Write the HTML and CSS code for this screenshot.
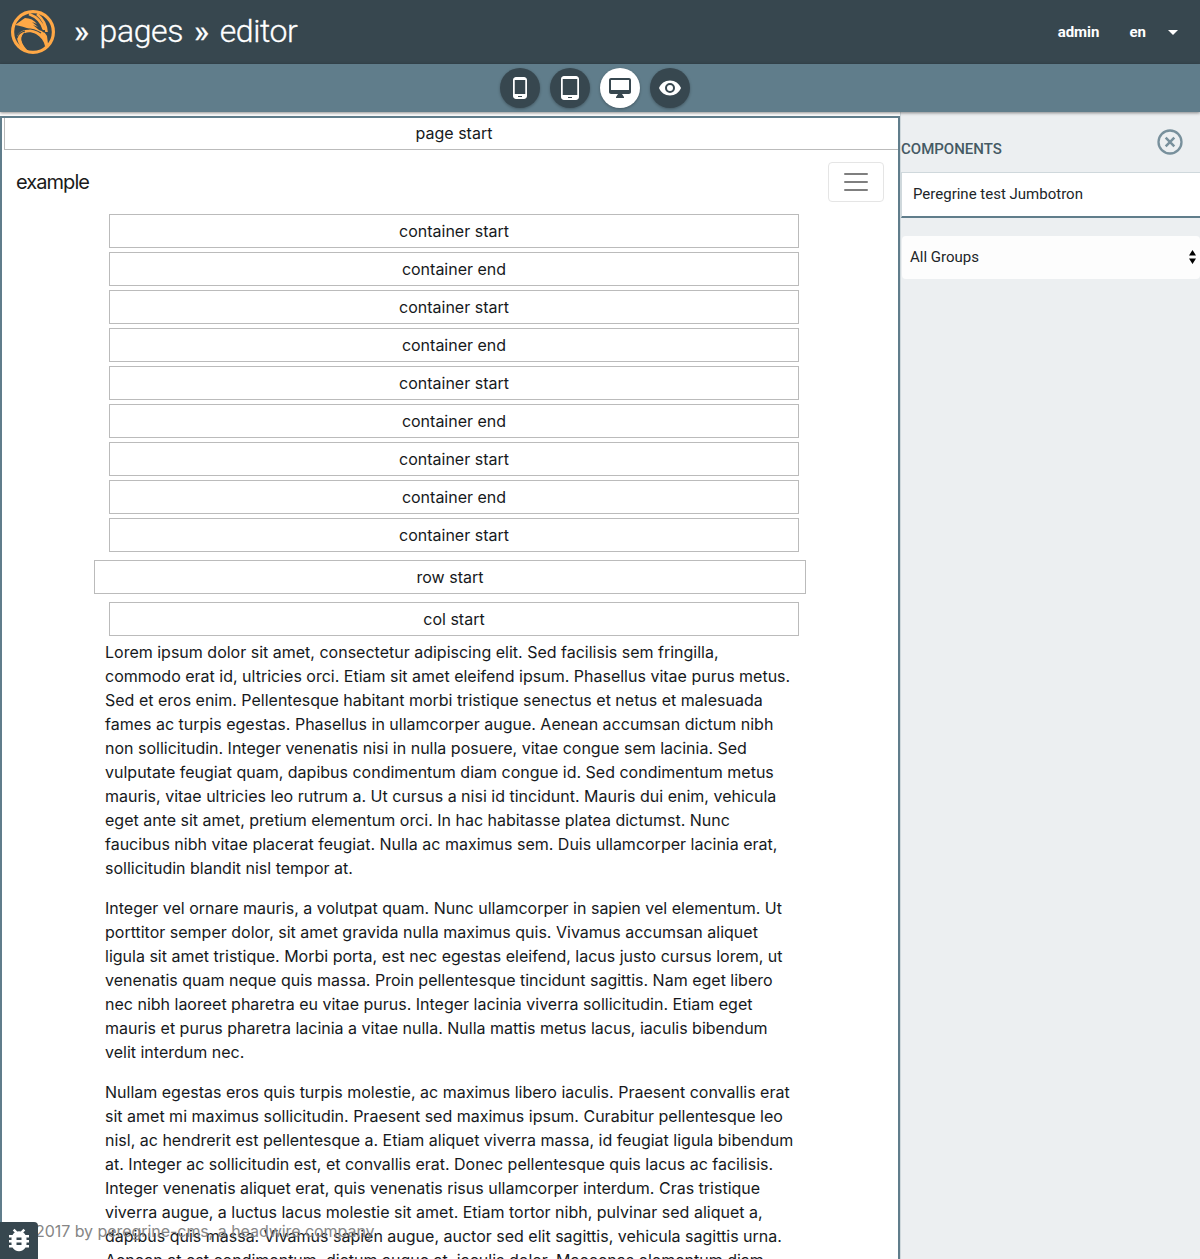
FILE: index.html
```html
<!DOCTYPE html>
<html lang="en">
<head>
<meta charset="utf-8">
<title>pages » editor</title>
<link rel="stylesheet" href="styles.css">
</head>
<body>
<header class="topbar">
  <svg class="logo" viewBox="0 0 44 44"><circle cx="22" cy="22" r="20.4" fill="none" stroke="#ffa846" stroke-width="3.2"/><path fill="#ffa846" d="M4 15c4-3 7-5 10-7 5 0 9 2 12 6l-5-2 6 5-5-2 6 5c3 1 6 2 8 6l1 8c-1 2-2 3-3 2-1-5-4-9-9-12-6-3-12-2-14 2-2 5 2 11 7 16-7-2-12-8-12-16 3-5 7-7 13-6-4-3-10-4-15-5z"/><path fill="none" stroke="#ffa846" stroke-width="2.600" d="M18 4c8 3 13 8 15 16M26 4c6 5 9 10 9.500 18"/><path fill="none" stroke="#37474f" stroke-width="1.200" d="M4 21c8-3 18-3 26 2M14 23c-4 3-4 9 1 14M6 28c1-4 4-6 8-7M31 20l2 2"/></svg>
  <h1 class="crumbs"><span class="sep">»</span><span>pages</span><span class="sep">»</span><span>editor</span></h1>
  <nav class="user"><span>admin</span><span class="lang">en</span><i class="caret"></i></nav>
</header>
<div class="toolbar">
  <button class="tool"><svg viewBox="0 0 24 24"><path d="M16 1H8C6.34 1 5 2.34 5 4v16c0 1.66 1.34 3 3 3h8c1.66 0 3-1.34 3-3V4c0-1.66-1.34-3-3-3zm-2 20h-4v-1h4v1zm3.25-3H6.75V4h10.500z"/></svg></button>
  <button class="tool tablet"><svg viewBox="0 0 24 24"><path d="M18 0H6C4.340 0 3 1.340 3 3v18c0 1.660 1.340 3 3 3h12c1.660 0 3-1.340 3-3V3c0-1.660-1.340-3-3-3zm-4 22h-4v-1h4v1zm5.250-3H4.750V3h14.500z"/></svg></button>
  <button class="tool active"><svg viewBox="0 0 24 24"><path d="M21 2H3c-1.100 0-2 .900-2 2v12c0 1.100.900 2 2 2h7l-2 3v1h8v-1l-2-3h7c1.100 0 2-.900 2-2V4c0-1.100-.900-2-2-2zm0 12H3V4h18z"/></svg></button>
  <button class="tool"><svg viewBox="0 0 24 24"><path d="M12 4.500C7 4.500 2.730 7.610 1 12c1.730 4.390 6 7.500 11 7.500s9.270-3.110 11-7.500c-1.730-4.390-6-7.500-11-7.500zM12 17a5 5 0 1 1 0-10 5 5 0 0 1 0 10zm0-8a3 3 0 1 0 0 6 3 3 0 0 0 0-6z"/></svg></button>
</div>
<main class="workspace">
  <section class="canvas">
    <div class="marker page">page start</div>
    <div class="navbar"><span class="brand">example</span><div class="toggler"><svg viewBox="0 0 30 30"><path stroke="#7f7f7f" stroke-width="2" stroke-linecap="round" d="M4 7h22M4 15h22M4 23h22"/></svg></div></div>
    <div class="container">
      <div class="marker">container start</div>
      <div class="marker">container end</div>
      <div class="marker">container start</div>
      <div class="marker">container end</div>
      <div class="marker">container start</div>
      <div class="marker">container end</div>
      <div class="marker">container start</div>
      <div class="marker">container end</div>
      <div class="marker">container start</div>
      <div class="marker row">row start</div>
      <div class="marker">col start</div>
      <p>Lorem ipsum dolor sit amet, consectetur adipiscing elit. Sed facilisis sem fringilla,<br>commodo erat id, ultricies orci. Etiam sit amet eleifend ipsum. Phasellus vitae purus metus.<br>Sed et eros enim. Pellentesque habitant morbi tristique senectus et netus et malesuada<br>fames ac turpis egestas. Phasellus in ullamcorper augue. Aenean accumsan dictum nibh<br>non sollicitudin. Integer venenatis nisi in nulla posuere, vitae congue sem lacinia. Sed<br>vulputate feugiat quam, dapibus condimentum diam congue id. Sed condimentum metus<br>mauris, vitae ultricies leo rutrum a. Ut cursus a nisi id tincidunt. Mauris dui enim, vehicula<br>eget ante sit amet, pretium elementum orci. In hac habitasse platea dictumst. Nunc<br>faucibus nibh vitae placerat feugiat. Nulla ac maximus sem. Duis ullamcorper lacinia erat,<br>sollicitudin blandit nisl tempor at.</p>
      <p>Integer vel ornare mauris, a volutpat quam. Nunc ullamcorper in sapien vel elementum. Ut<br>porttitor semper dolor, sit amet gravida nulla maximus quis. Vivamus accumsan aliquet<br>ligula sit amet tristique. Morbi porta, est nec egestas eleifend, lacus justo cursus lorem, ut<br>venenatis quam neque quis massa. Proin pellentesque tincidunt sagittis. Nam eget libero<br>nec nibh laoreet pharetra eu vitae purus. Integer lacinia viverra sollicitudin. Etiam eget<br>mauris et purus pharetra lacinia a vitae nulla. Nulla mattis metus lacus, iaculis bibendum<br>velit interdum nec.</p>
      <p>Nullam egestas eros quis turpis molestie, ac maximus libero iaculis. Praesent convallis erat<br>sit amet mi maximus sollicitudin. Praesent sed maximus ipsum. Curabitur pellentesque leo<br>nisl, ac hendrerit est pellentesque a. Etiam aliquet viverra massa, id feugiat ligula bibendum<br>at. Integer ac sollicitudin est, et convallis erat. Donec pellentesque quis lacus ac facilisis.<br>Integer venenatis aliquet erat, quis venenatis risus ullamcorper interdum. Cras tristique<br>viverra augue, a luctus lacus molestie sit amet. Etiam tortor nibh, pulvinar sed aliquet a,<br>dapibus quis massa. Vivamus sapien augue, auctor sed elit sagittis, vehicula sagittis urna.<br>Aenean at est condimentum, dictum augue at, iaculis dolor. Maecenas elementum diam</p>
    </div>
    <footer class="copyright">2017 by peregrine-cms, a headwire company</footer>
  </section>
  <aside class="panel">
    <div class="panel-head"><h2>COMPONENTS</h2><svg class="close" viewBox="0 0 26 26"><g fill="none" stroke="#78909c"><circle cx="13" cy="13" r="11.500" stroke-width="2.300"/><path stroke-width="2.500" d="M8.700 8.700l8.600 8.600M17.300 8.700l-8.600 8.600"/></g></svg></div>
    <div class="filter">Peregrine test Jumbotron</div>
    <div class="select"><span>All Groups</span><svg viewBox="0 0 7 14"><path d="M0 5.500L3.500 0 7 5.500zM0 8.500h7L3.500 14z"/></svg></div>
  </aside>
</main>
<div class="debug"><svg viewBox="0 0 24 24"><path d="M20 8h-2.810a6 6 0 0 0-1.820-1.960L17 4.410 15.590 3l-2.170 2.170a6 6 0 0 0-2.830 0L8.410 3 7 4.410l1.620 1.630A6 6 0 0 0 6.810 8H4v2h2.090L6 11v1H4v2h2v1l.090 1H4v2h2.810a6 6 0 0 0 10.380 0H20v-2h-2.090l.090-1v-1h2v-2h-2v-1l-.090-1H20zm-6 8h-4v-2h4zm0-4h-4v-2h4z"/></svg></div>
</body>
</html>
```

FILE: styles.css
```css
* { box-sizing: border-box; }
body { margin: 0; height: 1259px; overflow: hidden; display: flex; flex-direction: column; background: #fff; font-family: Roboto, sans-serif; color: #212529; }
.topbar { flex: none; height: 64px; background: #37474f; color: #fff; display: flex; align-items: center; padding: 0 22px 0 11px; }
.logo { width: 44px; height: 44px; }
.crumbs { margin: -2px 0 0 19px; font-size: 32px; line-height: 40px; font-weight: 300; letter-spacing: -.4px; -webkit-text-stroke: .3px #fff; display: flex; gap: 11px; }
.sep { font-weight: 400; }
.user { margin-left: auto; display: flex; align-items: center; font-size: 15px; font-weight: 700; }
.lang { margin: 0 22px 0 30px; }
.caret { border: 5px solid transparent; border-top-color: #fff; border-bottom: 0; }
.toolbar { flex: none; height: 48px; background: #607d8b; display: flex; justify-content: center; align-items: center; gap: 10px; padding-right: 10px; box-shadow: 0 1px 3px rgba(0,0,0,.45); position: relative; }
.tool { width: 40px; height: 40px; padding: 0; border: 0; border-radius: 50%; background: #37474f; display: flex; align-items: center; justify-content: center; box-shadow: 0 1px 3px rgba(0,0,0,.3); }
.tool svg { width: 24px; height: 24px; fill: #fff; }
.tool.active { background: #fff; }
.tool.active svg { fill: #37474f; }
.workspace { flex: 1; min-height: 0; display: flex; }
.canvas { width: 900px; margin-top: 4px; border: 2px solid #607d8b; border-bottom: 0; overflow: hidden; position: relative; font-family: Inter, sans-serif; font-size: 16px; line-height: 24px; color: #16191c; }
.marker { height: 34px; margin: 4px; border: 1px solid #bbb; text-align: center; line-height: 32px; }
.page { margin: -2px -6px 0 2px; }
.navbar { height: 64px; margin-bottom: -4px; padding: 0 14px; display: flex; align-items: center; justify-content: space-between; font-size: 20px; color: #1a1a1a; }
.brand { letter-spacing: -.95px; }
.toggler { width: 56px; height: 40px; border: 1px solid #e5e5e5; border-radius: 4px; display: flex; align-items: center; justify-content: center; }
.toggler svg { width: 30px; height: 30px; }
.container { width: 698px; margin-left: 103px; }
.container .row { margin: 8px -3px 8px -11px; }
.container p { margin: 0 0 16px; white-space: nowrap; }
.copyright { position: absolute; left: 33px; top: 1101px; color: #868686; letter-spacing: -.05px; white-space: nowrap; }
.panel { flex: 1; background: #eceff1; border-left: 1px solid #cfd8dc; }
.panel-head { height: 60px; display: flex; justify-content: space-between; padding: 17px 17px 0 0; }
.panel h2 { margin: 10px 0 0; font-size: 15px; line-height: 20px; font-weight: 500; color: #455a64; }
.close { width: 26px; height: 26px; }
.filter { height: 46px; padding: 0 11px; background: #fff; border: 1px solid #cfd8dc; border-right: 0; border-bottom: 2px solid #607d8b; font-size: 15px; line-height: 42px; }
.select { height: 43px; margin: 18px 0 0 1px; padding: 0 4px 2px 8px; background: #fdfdfd; border-radius: 4px; display: flex; justify-content: space-between; align-items: center; font-size: 15px; }
.select svg { width: 7px; height: 14px; }
.debug { position: absolute; left: 0; bottom: 0; width: 38px; height: 37px; padding-bottom: 2px; border-top-right-radius: 4px; background: #37474f; display: flex; align-items: center; justify-content: center; }
.debug svg { width: 30px; height: 30px; fill: #fff; }
```
